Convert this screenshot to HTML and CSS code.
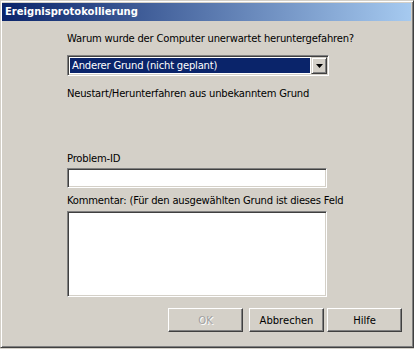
FILE: index.html
```html
<!DOCTYPE html>
<html lang="de">
<head>
  <meta charset="UTF-8">
  <title>Ereignisprotokollierung</title>
  <link rel="stylesheet" href="styles.css">
</head>
<body>

  <!-- Dialogfenster -->
  <div class="window">
    <div class="titlebar">Ereignisprotokollierung</div>

    <div class="content">
      <p class="question">Warum wurde der Computer unerwartet heruntergefahren?</p>

      <!-- Auswahlliste -->
      <div class="combo">
        <span class="combo-value">Anderer Grund (nicht geplant)</span>
        <span class="combo-btn">
          <svg width="7" height="4" viewBox="0 0 7 4"><path d="M0 0h7L3.5 4z" fill="#000"/></svg>
        </span>
      </div>

      <p class="reason">Neustart/Herunterfahren aus unbekanntem Grund</p>

      <label class="label label-id">Problem-ID</label>
      <input class="field" type="text">

      <label class="label label-comment">Kommentar: (Für den ausgewählten Grund ist dieses Feld</label>
      <textarea class="field area"></textarea>

      <!-- Schaltflächen -->
      <div class="buttons">
        <button class="btn" disabled>OK</button>
        <button class="btn btn-cancel">Abbrechen</button>
        <button class="btn btn-help">Hilfe</button>
      </div>
    </div>
  </div>

</body>
</html>
```

FILE: styles.css
```css
html, body {
  margin: 0;
  padding: 0;
  background: #d4d0c8;
  font-family: 'DejaVu Sans', 'Liberation Sans', sans-serif;
  font-size: 10px;
  color: #000;
}

.window {
  box-sizing: border-box;
  width: 414px;
  height: 348px;
  background: #d4d0c8;
  border: 1px solid;
  border-color: #d4d0c8 #404040 #404040 #d4d0c8;
  box-shadow: inset 1px 1px #fff, inset -1px -1px #808080;
  padding: 2px 2px 0 1px;
  display: flex;
  flex-direction: column;
}

.titlebar {
  height: 18px;
  line-height: 18px;
  padding-left: 3px;
  background: linear-gradient(to right, #0a246a, #a6caf0);
  color: #fff;
  font-weight: bold;
  font-size: 10px;
}

.content {
  padding: 11px 9px 0 65px;
  display: flex;
  flex-direction: column;
  align-items: flex-start;
  letter-spacing: -0.2px;
}

p, .label {
  margin: 0;
  line-height: 13px;
  white-space: nowrap;
}

/* Auswahlliste */
.combo {
  box-sizing: border-box;
  margin-top: 10px;
  width: 262px;
  height: 21px;
  display: flex;
  border: 1px solid;
  border-color: #808080 #fff #fff #808080;
  box-shadow: inset 1px 1px #404040, inset -1px -1px #d4d0c8;
  padding: 2px;
  background: #fff;
}

.combo-value {
  flex: 1;
  background: #0a246a;
  color: #fff;
  line-height: 15px;
  padding-left: 2px;
}

.combo-btn {
  box-sizing: border-box;
  width: 16px;
  margin: -1px -1px -1px 1px;
  background: #d4d0c8;
  border: 1px solid;
  border-color: #d4d0c8 #404040 #404040 #d4d0c8;
  box-shadow: inset 1px 1px #fff, inset -1px -1px #808080;
  display: flex;
  align-items: center;
  justify-content: center;
}

.reason {
  margin-top: 11px;
}

.label-id {
  margin-top: 52px;
}

.label-comment {
  margin-top: 6px;
}

.field {
  box-sizing: border-box;
  display: block;
  margin: 3px 0 0 0;
  width: 260px;
  height: 20px;
  padding: 0;
  background: #fff;
  border: 1px solid;
  border-color: #808080 #fff #fff #808080;
  box-shadow: inset 1px 1px #404040, inset -1px -1px #d4d0c8;
  font: inherit;
  outline: none;
  resize: none;
}

.area {
  margin-top: 4px;
  height: 86px;
}

/* Schaltflächen */
.buttons {
  align-self: flex-end;
  margin-top: 11px;
  display: flex;
}

.btn {
  box-sizing: border-box;
  width: 75px;
  height: 24px;
  padding: 0;
  background: #d4d0c8;
  border: 1px solid;
  border-color: #fff #404040 #404040 #fff;
  box-shadow: inset -1px -1px #808080;
  font: inherit;
  color: #000;
}

.btn:disabled {
  color: #a0a0a0;
  text-shadow: 1px 1px #fff;
}

.btn-cancel {
  margin-left: 6px;
}

.btn-help {
  margin-left: 3px;
}
```
